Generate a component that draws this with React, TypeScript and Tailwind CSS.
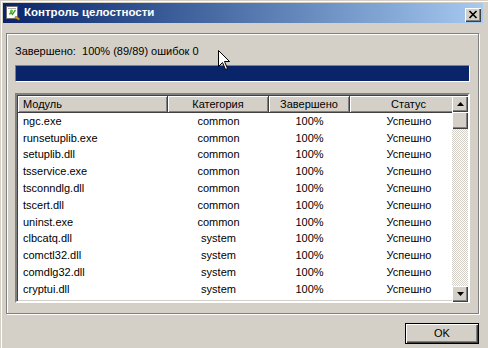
import React from "react";

const rows: [string, string][] = [
  ["ngc.exe", "common"],
  ["runsetuplib.exe", "common"],
  ["setuplib.dll", "common"],
  ["tsservice.exe", "common"],
  ["tsconndlg.dll", "common"],
  ["tscert.dll", "common"],
  ["uninst.exe", "common"],
  ["clbcatq.dll", "system"],
  ["comctl32.dll", "system"],
  ["comdlg32.dll", "system"],
  ["cryptui.dll", "system"],
  ["d3d9.dll", "system"],
];

const raised =
  "shadow-[inset_1px_1px_0_#ffffff,inset_-1px_-1px_0_#404040,inset_-2px_-2px_0_#808080]";

function TitleIcon() {
  return (
    <svg width="16" height="16" viewBox="0 0 16 16" className="shrink-0">
      <rect x="1.5" y="1.5" width="11" height="12" fill="#ffffff" stroke="#707070" />
      <rect x="3" y="3" width="8" height="1" fill="#b0b0b0" />
      <path d="M4 9 L6 6 L7.5 8 L10 4.5 L11 5.5 L7.5 10.5 L6 8.5 L5 10 Z" fill="#3a9a2a" />
      <circle cx="6.5" cy="6" r="1.6" fill="#6cc04a" />
      <path d="M9.5 12.5 L13.5 15 L15 14 L11 11 Z" fill="#e0a020" stroke="#8a5a00" strokeWidth="0.5" />
    </svg>
  );
}

function Arrow({ up }: { up?: boolean }) {
  return (
    <svg width="7" height="4" viewBox="0 0 7 4">
      {up ? <path d="M3.5 0 L7 4 L0 4 Z" fill="#000" /> : <path d="M0 0 L7 0 L3.5 4 Z" fill="#000" />}
    </svg>
  );
}

export default function App() {
  return (
    <div
      className="relative h-[348px] w-[488px] overflow-hidden bg-[#d4d0c8] pl-[3px] pt-[3px] text-[11px] text-black shadow-[inset_1px_1px_0_#d4d0c8,inset_2px_2px_0_#ffffff]"
      style={{ fontFamily: '"Liberation Sans", Arial, sans-serif' }}
    >
      {/* title bar */}
      <div className="flex h-[20px] w-[480px] items-center bg-gradient-to-r from-[#0a246a] to-[#a6caf0] pl-[2px]">
        <TitleIcon />
        <span className="ml-[3px] text-[11.5px] font-bold leading-none text-white">Контроль целостности</span>
        <button
          type="button"
          className={`ml-auto mr-[2px] mt-[3px] flex h-[14px] w-[16px] items-center justify-center bg-[#d4d0c8] ${raised}`}
        >
          <svg width="10" height="9" viewBox="0 0 10 9">
            <path d="M1.5 1 L8.5 8 M8.5 1 L1.5 8" stroke="#000" strokeWidth="1.7" />
          </svg>
        </button>
      </div>

      {/* etched panel */}
      <div className="ml-[3px] mt-[10px] flex h-[281px] w-[473px] flex-col border border-[#808080] pl-[8px] pt-[11px] shadow-[inset_1px_1px_0_#ffffff,1px_1px_0_#ffffff]">
        <div className="h-[13px] whitespace-pre leading-[13px]">Завершено:  100% (89/89) ошибок 0</div>

        <div className="mt-[7px] h-[17px] w-[455px] border border-b-white border-l-[#808080] border-r-white border-t-[#808080] bg-[#0a246a]" />

        <div className="mt-[11px] flex h-[210px] w-[455px] border-2 border-b-[#ffffff] border-l-[#808080] border-r-[#ffffff] border-t-[#808080] bg-white shadow-[inset_1px_1px_0_#404040,inset_-1px_-1px_0_#d4d0c8]">
          <div className="ml-px mt-px w-[435px] overflow-hidden">
            <div className="flex h-[17px] w-[450px] bg-[#d4d0c8] leading-[16px]">
              <div className="w-[150px] shrink-0 border-b border-r border-[#404040] pl-[5px] shadow-[inset_1px_1px_0_#ffffff,inset_-1px_-1px_0_#808080]">
                Модуль
              </div>
              <div className="w-[101px] shrink-0 border-b border-r border-[#404040] text-center shadow-[inset_1px_1px_0_#ffffff,inset_-1px_-1px_0_#808080]">
                Категория
              </div>
              <div className="w-[81px] shrink-0 border-b border-r border-[#404040] text-center shadow-[inset_1px_1px_0_#ffffff,inset_-1px_-1px_0_#808080]">
                Завершено
              </div>
              <div className="w-[118px] shrink-0 border-b border-r border-[#404040] text-center shadow-[inset_1px_1px_0_#ffffff,inset_-1px_-1px_0_#808080]">
                Статус
              </div>
            </div>
            {rows.map(([name, cat]) => (
              <div key={name} className="flex h-[16.8px] items-center leading-[13px]">
                <div className="w-[150px] shrink-0 pl-[5px]">{name}</div>
                <div className="w-[101px] shrink-0 text-center">{cat}</div>
                <div className="w-[81px] shrink-0 text-center">100%</div>
                <div className="w-[118px] shrink-0 text-center">Успешно</div>
              </div>
            ))}
          </div>

          {/* scrollbar */}
          <div className="mt-px flex h-[206px] w-[16px] flex-col">
            <div className={`flex h-[16px] items-center justify-center bg-[#d4d0c8] ${raised}`}>
              <Arrow up />
            </div>
            <div className={`h-[17px] bg-[#d4d0c8] ${raised}`} />
            <div className="flex-1 bg-[repeating-conic-gradient(#d4d0c8_0_25%,#ffffff_0_50%)] bg-[length:2px_2px]" />
            <div className={`flex h-[16px] items-center justify-center bg-[#d4d0c8] ${raised}`}>
              <Arrow />
            </div>
          </div>
        </div>
      </div>

      {/* OK button */}
      <button
        type="button"
        className="ml-[402px] mt-[9px] flex h-[21px] w-[74px] items-center justify-center border border-black bg-[#d4d0c8] text-[11px] shadow-[inset_1px_1px_0_#ffffff,inset_-1px_-1px_0_#404040,inset_-2px_-2px_0_#808080]"
      >
        OK
      </button>

      {/* mouse pointer */}
      <svg className="absolute left-[218px] top-[50px]" width="13" height="21" viewBox="0 0 13 21">
        <path
          d="M0.5 0.5 L0.5 16.5 L4.5 12.5 L7.5 19.5 L9.5 18.5 L6.5 11.5 L11.5 11.5 Z"
          fill="#ffffff"
          stroke="#000000"
          strokeWidth="1"
        />
      </svg>
    </div>
  );
}
